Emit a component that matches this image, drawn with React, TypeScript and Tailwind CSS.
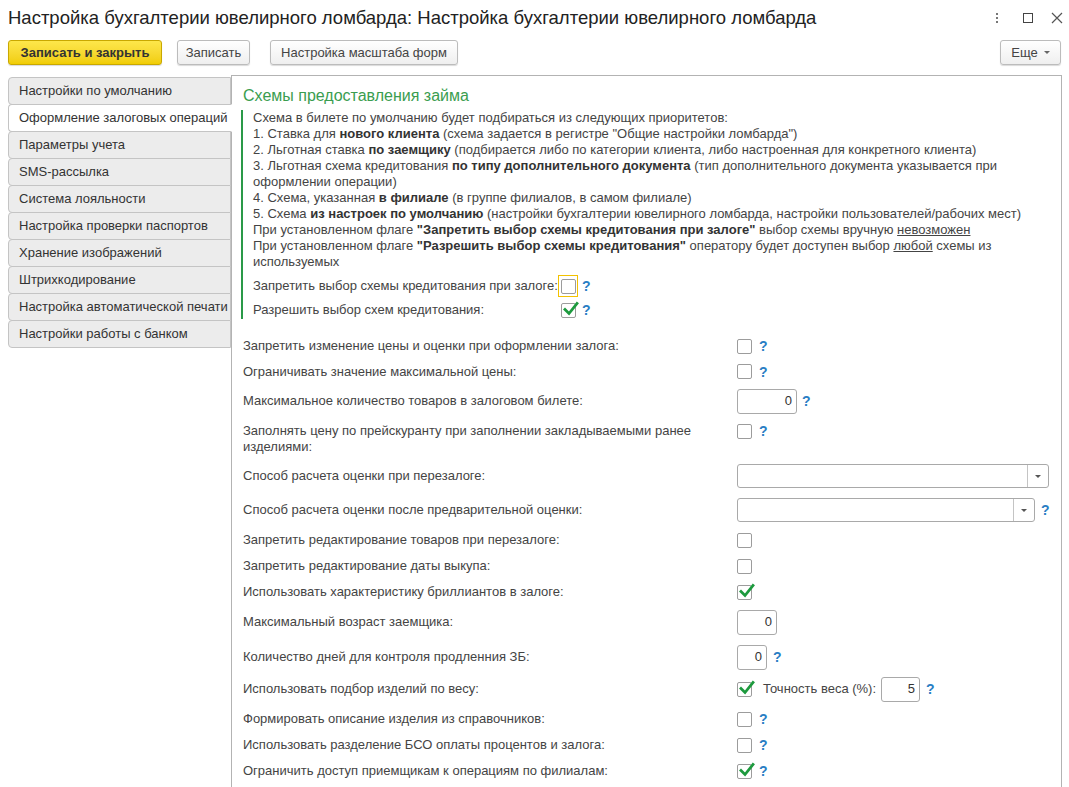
import type { ReactNode } from 'react';

const tabs = [
  'Настройки по умолчанию',
  'Оформление залоговых операций',
  'Параметры учета',
  'SMS-рассылка',
  'Система лояльности',
  'Настройка проверки паспортов',
  'Хранение изображений',
  'Штрихкодирование',
  'Настройка автоматической печати',
  'Настройки работы с банком',
];

function Help({ className = '' }: { className?: string }) {
  return (
    <span className={`text-[14px] font-semibold text-[#2a7ec4] leading-none ${className}`}>?</span>
  );
}

function Checkbox({ checked = false }: { checked?: boolean }) {
  return (
    <span className="relative inline-block w-[15px] h-[15px] border border-[#9c9c9c] rounded-[2px] bg-white shrink-0">
      {checked && (
        <svg className="absolute left-[1px] top-[-3px]" width="16" height="16" viewBox="0 0 16 16" fill="none">
          <path d="M2 8.5 L6 12.5 L14 2.5" stroke="#1d9a3e" strokeWidth="2.8" strokeLinecap="square" />
        </svg>
      )}
    </span>
  );
}

function NumField({ value, width }: { value: string; width: string }) {
  return (
    <span
      className={`${width} h-[25px] border border-[#a9a9a9] rounded-[3px] bg-white flex items-center justify-end pr-[4px] text-[13px] text-[#333] shrink-0`}
    >
      {value}
    </span>
  );
}

function Select({ width }: { width: string }) {
  return (
    <span className={`${width} h-[24px] border border-[#a9a9a9] rounded-[3px] bg-white flex justify-end shrink-0`}>
      <span className="w-[21px] h-full border-l border-[#c4c4c4] flex items-center justify-center">
        <span className="w-0 h-0 border-l-[3px] border-r-[3px] border-t-[3px] border-l-transparent border-r-transparent border-t-[#555]" />
      </span>
    </span>
  );
}

function Row({ label, children, className }: { label: ReactNode; children: ReactNode; className: string }) {
  return (
    <div className={`flex ${className}`}>
      <div className="w-[494px] shrink-0 text-[13px] leading-[16px] text-[#444]">{label}</div>
      <div className="flex items-center">{children}</div>
    </div>
  );
}

function Button({ children, className }: { children: ReactNode; className: string }) {
  return (
    <button
      type="button"
      className={`h-[25px] rounded-[3px] border text-[13px] flex items-center justify-center shadow-[0_1px_1px_rgba(0,0,0,0.15)] ${className}`}
    >
      {children}
    </button>
  );
}

export default function App() {
  return (
    <div className="w-[1069px] h-[787px] bg-white overflow-hidden flex flex-col [font-family:'Liberation_Sans',Arial,sans-serif] text-[#333]">
      {/* Title bar */}
      <div className="h-[36px] flex items-center pl-[8px] pr-[6px] shrink-0">
        <div className="text-[18.5px] text-[#222] whitespace-nowrap">
          Настройка бухгалтерии ювелирного ломбарда: Настройка бухгалтерии ювелирного ломбарда
        </div>
        <div className="ml-auto flex items-center">
          <span className="flex flex-col gap-[2px] mr-[25px]">
            <span className="w-[2px] h-[2px] bg-[#777]" />
            <span className="w-[2px] h-[2px] bg-[#777]" />
            <span className="w-[2px] h-[2px] bg-[#777]" />
          </span>
          <span className="w-[10px] h-[10px] border border-[#444] mr-[18px]" />
          <svg width="12" height="12" viewBox="0 0 12 12">
            <path d="M1 1 L11 11 M11 1 L1 11" stroke="#555" strokeWidth="1.2" />
          </svg>
        </div>
      </div>

      {/* Toolbar */}
      <div className="mt-[4px] h-[25px] flex items-center pl-[8px] pr-[8px] shrink-0">
        <Button className="w-[154px] font-bold text-[#333] border-[#c9a800] bg-gradient-to-b from-[#fde74a] to-[#f1cd00]">
          Записать и закрыть
        </Button>
        <Button className="ml-[15px] w-[73px] text-[#444] border-[#bcbcbc] bg-gradient-to-b from-white to-[#efefef]">
          Записать
        </Button>
        <Button className="ml-[20px] w-[188px] text-[#444] border-[#bcbcbc] bg-gradient-to-b from-white to-[#efefef]">
          Настройка масштаба форм
        </Button>
        <Button className="ml-auto w-[61px] text-[#444] border-[#bcbcbc] bg-gradient-to-b from-white to-[#efefef] gap-[6px]">
          <span>Еще</span>
          <span className="w-0 h-0 border-l-[3px] border-r-[3px] border-t-[3px] border-l-transparent border-r-transparent border-t-[#666]" />
        </Button>
      </div>

      {/* Body */}
      <div className="mt-[10px] flex-1 min-h-0 flex">
        <div className="w-[223px] ml-[8px] pt-[2px] flex flex-col shrink-0">
          {tabs.map((t, i) => (
            <div
              key={t}
              className={`h-[28px] flex items-center pl-[10px] text-[13px] text-[#333] whitespace-nowrap border rounded-l-[4px] ${
                i > 0 ? 'mt-[-1px]' : ''
              } ${
                i === 1
                  ? 'bg-white border-[#c4c4c4] border-r-white relative z-10 mr-[-1px]'
                  : 'bg-[#ececec] border-[#c4c4c4]'
              }`}
            >
              {t}
            </div>
          ))}
        </div>

        <div className="flex-1 border-l border-t border-r border-[#b3b3b3] mr-[7px] pl-[9px] pt-[10px] overflow-hidden">
          <div className="pl-[2px] text-[16px] leading-[20px] text-[#3a9d4f] mb-[4px]">
            Схемы предоставления займа
          </div>

          <div className="border-l-2 border-[#2a9a48] pl-[10px] text-[13px] leading-[16px] text-[#444] whitespace-nowrap">
            <div>Схема в билете по умолчанию будет подбираться из следующих приоритетов:</div>
            <div>
              1. Ставка для <b className="text-[#333]">нового клиента</b> (схема задается в регистре "Общие настройки ломбарда")
            </div>
            <div>
              2. Льготная ставка <b className="text-[#333]">по заемщику</b> (подбирается либо по категории клиента, либо настроенная для конкретного клиента)
            </div>
            <div>
              3. Льготная схема кредитования <b className="text-[#333]">по типу дополнительного документа</b> (тип дополнительного документа указывается при
            </div>
            <div>оформлении операции)</div>
            <div>
              4. Схема, указанная <b className="text-[#333]">в филиале</b> (в группе филиалов, в самом филиале)
            </div>
            <div>
              5. Схема <b className="text-[#333]">из настроек по умолчанию</b> (настройки бухгалтерии ювелирного ломбарда, настройки пользователей/рабочих мест)
            </div>
            <div>
              При установленном флаге <b className="text-[#333]">"Запретить выбор схемы кредитования при залоге"</b> выбор схемы вручную <u>невозможен</u>
            </div>
            <div>
              При установленном флаге <b className="text-[#333]">"Разрешить выбор схемы кредитования"</b> оператору будет доступен выбор <u>любой</u> схемы из
            </div>
            <div>используемых</div>

            <div className="mt-[4px] h-[24px] flex items-center">
              <div className="w-[305px]">Запретить выбор схемы кредитования при залоге:</div>
              <span className="w-[20px] h-[22px] border border-[#f3c200] flex items-center justify-center">
                <Checkbox />
              </span>
              <Help className="ml-[4px]" />
            </div>
            <div className="mt-[3px] h-[18px] flex items-center">
              <div className="w-[305px]">Разрешить выбор схем кредитования:</div>
              <span className="w-[20px] h-[18px] flex items-center justify-center">
                <Checkbox checked />
              </span>
              <Help className="ml-[4px]" />
            </div>
          </div>

          <div className="pl-[2px]">
            <Row className="mt-[14px] h-[26px] items-center" label="Запретить изменение цены и оценки при оформлении залога:">
              <Checkbox />
              <Help className="ml-[7px]" />
            </Row>
            <Row className="h-[25px] items-center" label="Ограничивать значение максимальной цены:">
              <Checkbox />
              <Help className="ml-[7px]" />
            </Row>
            <Row className="mt-[2px] h-[30px] items-center" label="Максимальное количество товаров в залоговом билете:">
              <NumField value="0" width="w-[60px]" />
              <Help className="ml-[5px]" />
            </Row>
            <Row
              className="mt-[6px] h-[40px] items-start pt-[1px]"
              label={
                <>
                  Заполнять цену по прейскуранту при заполнении закладываемыми ранее
                  <br />
                  изделиями:
                </>
              }
            >
              <div className="flex items-center h-[16px]">
                <Checkbox />
                <Help className="ml-[7px]" />
              </div>
            </Row>
            <Row className="mt-[1px] h-[26px] items-center" label="Способ расчета оценки при перезалоге:">
              <Select width="w-[312px]" />
            </Row>
            <Row className="mt-[8px] h-[26px] items-center" label="Способ расчета оценки после предварительной оценки:">
              <Select width="w-[298px]" />
              <Help className="ml-[6px]" />
            </Row>
            <Row className="mt-[4px] h-[26px] items-center" label="Запретить редактирование товаров при перезалоге:">
              <Checkbox />
            </Row>
            <Row className="h-[26px] items-center" label="Запретить редактирование даты выкупа:">
              <Checkbox />
            </Row>
            <Row className="h-[26px] items-center" label="Использовать характеристику бриллиантов в залоге:">
              <Checkbox checked />
            </Row>
            <Row className="mt-[3px] h-[28px] items-center" label="Максимальный возраст заемщика:">
              <NumField value="0" width="w-[40px]" />
            </Row>
            <Row className="mt-[7px] h-[28px] items-center" label="Количество дней для контроля продленния ЗБ:">
              <NumField value="0" width="w-[30px]" />
              <Help className="ml-[6px]" />
            </Row>
            <Row className="mt-[5px] h-[26px] items-center" label="Использовать подбор изделий по весу:">
              <Checkbox checked />
              <span className="ml-[11px] text-[13px] text-[#444]">Точность веса (%):</span>
              <span className="ml-[5px]">
                <NumField value="5" width="w-[39px]" />
              </span>
              <Help className="ml-[6px]" />
            </Row>
            <Row className="mt-[4px] h-[26px] items-center" label="Формировать описание изделия из справочников:">
              <Checkbox />
              <Help className="ml-[7px]" />
            </Row>
            <Row className="h-[26px] items-center" label="Использовать разделение БСО оплаты процентов и залога:">
              <Checkbox />
              <Help className="ml-[7px]" />
            </Row>
            <Row className="h-[26px] items-center" label="Ограничить доступ приемщикам к операциям по филиалам:">
              <Checkbox checked />
              <Help className="ml-[7px]" />
            </Row>
          </div>
        </div>
      </div>
    </div>
  );
}
